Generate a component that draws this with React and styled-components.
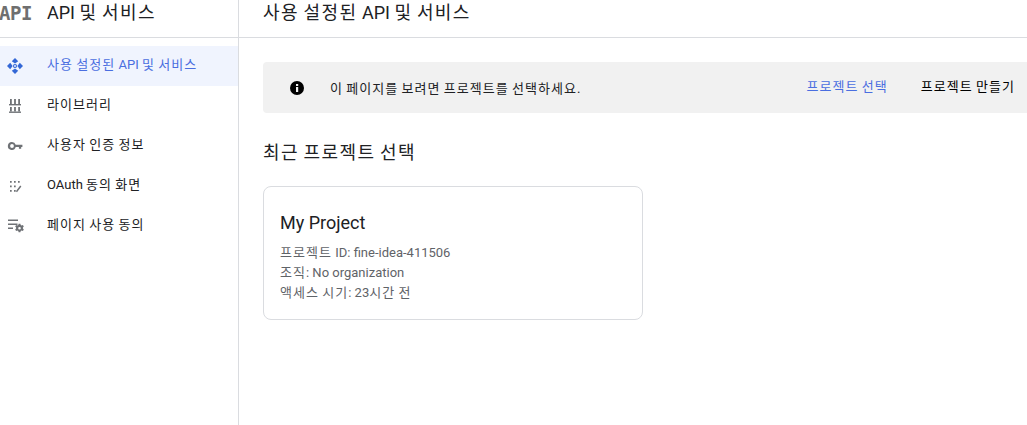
import React from "react";
import styled, { createGlobalStyle } from "styled-components";

const Global = createGlobalStyle`
  html, body { margin: 0; padding: 0; background: #fff; overflow: hidden; }
  body { font-family: Roboto, "Noto Sans CJK KR", sans-serif; }
`;

const Page = styled.div`
  display: flex;
  width: 1027px;
  height: 425px;
  overflow: hidden;
`;
const Sidebar = styled.aside`
  width: 238px;
  flex: none;
  border-right: 1px solid #dadce0;
`;
const SideHeader = styled.div`
  height: 37px;
  border-bottom: 1px solid #dadce0;
  display: flex;
  align-items: flex-start;
`;
const Logo = styled.span`
  width: 47px;
  flex: none;
  margin: 2px 0 0 -1px;
  font: bold 19px/22px "DejaVu Sans Mono", monospace;
  letter-spacing: -0.4px;
  color: #6f6f6f;
`;
const SideTitle = styled.span`
  font-size: 18px;
  line-height: 24px;
  color: #202124;
  margin: 1px 0 0 1px;
`;
const Nav = styled.nav`
  padding-top: 8px;
  display: flex;
  flex-direction: column;
`;
const NavItem = styled.div`
  height: 40px;
  display: flex;
  align-items: center;
  background: ${p => (p.$active ? "#f0f4fe" : "transparent")};
  color: ${p => (p.$active ? "#4a6ee0" : "#202124")};
  font-size: 13px;
`;
const NavIcon = styled.span`
  width: 47px;
  flex: none;
  padding-left: 7px;
  box-sizing: border-box;
  display: flex;
  color: ${p => (p.$active ? "#3367d6" : "#6f7276")};
`;
const NavLabel = styled.span`
  padding-bottom: 5px;
`;
const Main = styled.main`
  flex: 1;
  min-width: 0;
`;
const MainHeader = styled.div`
  height: 36px;
  padding: 1px 0 0 24px;
  border-bottom: 1px solid #dadce0;
  font-size: 18px;
  line-height: 24px;
  color: #202124;
`;
const Content = styled.div`
  padding: 24px 0 0 24px;
`;
const Banner = styled.div`
  height: 51px;
  box-sizing: border-box;
  background: #f1f1f1;
  border-radius: 4px 0 0 4px;
  display: flex;
  align-items: center;
  padding: 0 12px 0 27px;
  font-size: 13px;
  color: #202124;
`;
const BannerIcon = styled.span`
  display: flex;
  width: 40px;
  flex: none;
`;
const BannerText = styled.span`
  flex: 1;
  padding-bottom: 1px;
`;
const BannerAction = styled.span`
  padding-bottom: 4px;
  color: ${p => (p.$primary ? "#4a6ee0" : "#000")};
  margin-left: ${p => (p.$primary ? "0" : "33px")};
`;
const Heading = styled.h2`
  margin: 27px 0 20px;
  font-size: 18px;
  line-height: 26px;
  font-weight: 400;
  color: #202124;
`;
const Card = styled.div`
  width: 346px;
  height: 108px;
  border: 1px solid #dadce0;
  border-radius: 8px;
  padding: 24px 16px 0;
`;
const CardTitle = styled.div`
  font-size: 18px;
  line-height: 24px;
  color: #202124;
  margin-bottom: 8px;
`;
const CardLine = styled.div`
  font-size: 13px;
  line-height: 20px;
  color: #5f6368;
`;
const Ko = styled.span`
  letter-spacing: 0.08em;
`;

const T = ({ children }) =>
  children.split(/([가-힣]+)/).map((part, i) =>
    i % 2 ? <Ko key={i}>{part}</Ko> : part
  );

const ApiIcon = () => (
  <svg width="16" height="16" viewBox="0 0 16 16" fill="currentColor">
    <path d="M8 0 11.2 3.2 8 5.6 4.8 3.2Z" />
    <path d="M8 16 11.2 12.8 8 10.4 4.8 12.8Z" />
    <path d="M0 8 3.2 4.8 5.6 8 3.2 11.2Z" />
    <path d="M16 8 12.8 4.8 10.4 8 12.8 11.2Z" />
    <circle cx="8" cy="8" r="1.5" fill="none" stroke="currentColor" strokeWidth="1.1" />
  </svg>
);
const LibraryIcon = () => (
  <svg width="16" height="16" viewBox="0 0 16 16" fill="currentColor">
    <path d="M3 1h1.8v5H3zM7.1 1h1.8v5H7.1zM11.2 1h1.8v5h-1.8z" />
    <path d="M2 6h12v1.4H2z" />
    <path d="M3 9h1.8v4.5H3zM7.1 9h1.8v4.5H7.1zM11.2 9h1.8v4.5h-1.8z" />
    <path d="M2 13.5h12v1.4H2z" />
  </svg>
);
const KeyIcon = () => (
  <svg width="16" height="16" viewBox="0 0 16 16" fill="currentColor">
    <path fillRule="evenodd" d="M5 4a4 4 0 0 1 3.7 2.8H15.4v2.3h-1.2v1.7h-2.3V9.1H8.7A4 4 0 1 1 5 4Zm0 2.1a1.9 1.9 0 1 0 0 3.8 1.9 1.9 0 0 0 0-3.8Z" />
  </svg>
);
const ConsentIcon = () => (
  <svg width="16" height="16" viewBox="0 0 16 16" fill="currentColor">
    <path d="M3 3h1.7v1.7H3zM7 3h1.7v1.7H7zM11 3h1.7v1.7H11zM3 7.5h1.7v1.7H3zM7 7.5h1.7v1.7H7zM3 12h1.7v1.7H3zM7 12h1.7v1.7H7z" />
    <path d="M13.2 7.6 14.4 8.6 10 14.2 8.9 13.3Z" />
  </svg>
);
const UsageIcon = () => (
  <svg width="17" height="16" viewBox="0 0 17 16" fill="currentColor">
    <path d="M1 1.6h10v1.3H1zM1 5.6h9.5v1.3H1zM1 9.6h5v1.3H1z" />
    <path fillRule="evenodd" d="M11.6 5.8h1.8l.3 1.2 1 .5 1.2-.4.9 1.5-.9.8v1.2l.9.8-.9 1.5-1.2-.4-1 .5-.3 1.2h-1.8l-.3-1.2-1-.5-1.2.4-.9-1.5.9-.8V9.4l-.9-.8.9-1.5 1.2.4 1-.5Zm.9 3.2a1.3 1.3 0 1 0 0 2.6 1.3 1.3 0 0 0 0-2.6Z" />
  </svg>
);
const InfoIcon = () => (
  <svg width="14" height="14" viewBox="0 0 14 14">
    <circle cx="7" cy="7" r="7" fill="#000" />
    <rect x="6" y="6" width="2.2" height="5" fill="#f1f1f1" />
    <rect x="6" y="3" width="2.2" height="2" fill="#f1f1f1" />
  </svg>
);

const items = [
  { label: "사용 설정된 API 및 서비스", Icon: ApiIcon, active: true },
  { label: "라이브러리", Icon: LibraryIcon },
  { label: "사용자 인증 정보", Icon: KeyIcon },
  { label: "OAuth 동의 화면", Icon: ConsentIcon },
  { label: "페이지 사용 동의", Icon: UsageIcon },
];

export default function App() {
  return (
    <Page>
      <Global />
      <Sidebar>
        <SideHeader>
          <Logo>API</Logo>
          <SideTitle><T>API 및 서비스</T></SideTitle>
        </SideHeader>
        <Nav>
          {items.map(({ label, Icon, active }) => (
            <NavItem key={label} $active={active}>
              <NavIcon $active={active}><Icon /></NavIcon>
              <NavLabel><T>{label}</T></NavLabel>
            </NavItem>
          ))}
        </Nav>
      </Sidebar>
      <Main>
        <MainHeader><T>사용 설정된 API 및 서비스</T></MainHeader>
        <Content>
          <Banner>
            <BannerIcon><InfoIcon /></BannerIcon>
            <BannerText><T>이 페이지를 보려면 프로젝트를 선택하세요.</T></BannerText>
            <BannerAction $primary><T>프로젝트 선택</T></BannerAction>
            <BannerAction><T>프로젝트 만들기</T></BannerAction>
          </Banner>
          <Heading><T>최근 프로젝트 선택</T></Heading>
          <Card>
            <CardTitle>My Project</CardTitle>
            <CardLine><T>프로젝트 ID: fine-idea-411506</T></CardLine>
            <CardLine><T>조직: No organization</T></CardLine>
            <CardLine><T>액세스 시기: 23시간 전</T></CardLine>
          </Card>
        </Content>
      </Main>
    </Page>
  );
}
